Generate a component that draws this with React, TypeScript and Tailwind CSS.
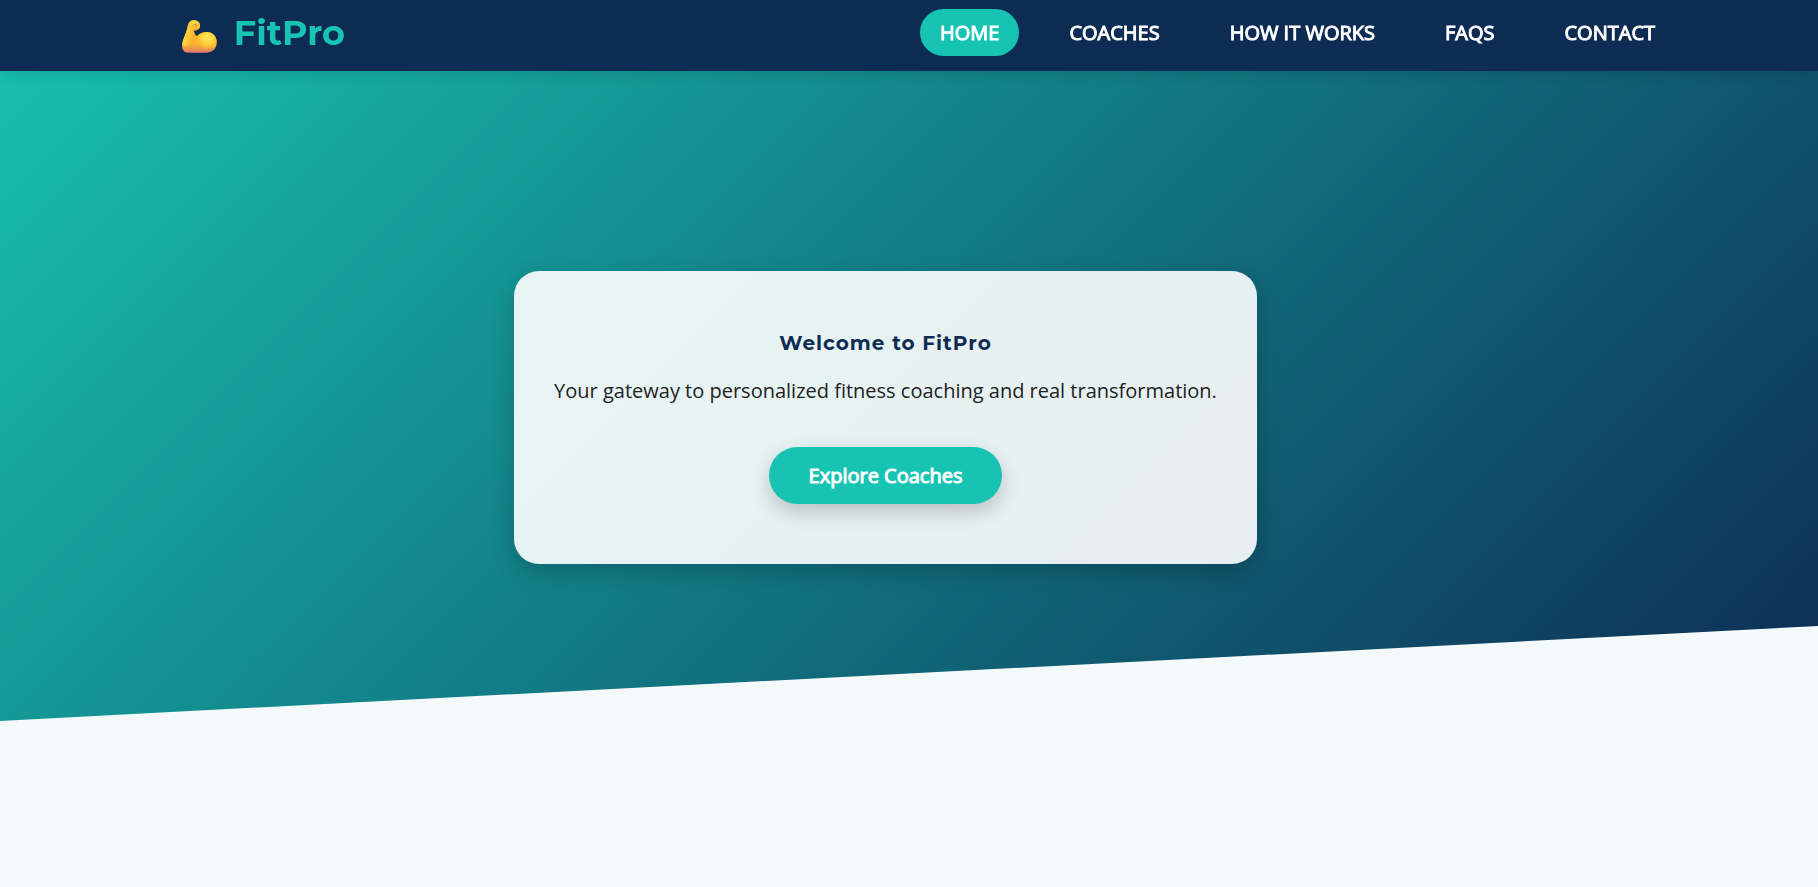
import React from 'react';

const links = [
  { label: 'HOME', href: '#home' },
  { label: 'COACHES', href: '#coaches' },
  { label: 'HOW IT WORKS', href: '#how-it-works' },
  { label: 'FAQS', href: '#faqs' },
  { label: 'CONTACT', href: '#contact' },
];

const ArmIcon: React.FC = () => (
  <svg viewBox="0 0 105 100" className="w-[35px] h-[33px]" aria-hidden="true">
    <defs>
      <linearGradient id="arm" x1="0" y1="0" x2="0" y2="1">
        <stop offset="0" stopColor="#ffd84a" />
        <stop offset="0.68" stopColor="#fdb92e" />
        <stop offset="0.86" stopColor="#f29a48" />
        <stop offset="1" stopColor="#d9777a" />
      </linearGradient>
      <radialGradient id="muscle" cx="0.55" cy="0.3" r="0.65">
        <stop offset="0" stopColor="#ffe958" />
        <stop offset="0.6" stopColor="#ffcc36" />
        <stop offset="1" stopColor="#fdb528" stopOpacity="0" />
      </radialGradient>
      <linearGradient id="forearm" x1="0" y1="0.1" x2="0.8" y2="0.5">
        <stop offset="0" stopColor="#f7a42a" />
        <stop offset="0.5" stopColor="#ffd23f" />
        <stop offset="1" stopColor="#fbb02a" />
      </linearGradient>
      <radialGradient id="fist" cx="0.5" cy="0.3" r="0.7">
        <stop offset="0" stopColor="#ffdc50" />
        <stop offset="1" stopColor="#fbb52c" />
      </radialGradient>
    </defs>
    <path
      d="M18 14C21 5 28 0 36 1C47 1 54 8 54 17C54 27 47 32 36 31C35 38 38 44 45 49C52 40 62 36 74 36C93 36 105 49 105 67C105 86 93 99 75 99H17C6 99 0 90 0 78C0 61 13 42 18 14Z"
      fill="url(#arm)"
    />
    <path d="M18 14C13 42 0 61 0 76C6 84 24 80 44 57C46 54 46 51 45 49C38 44 35 38 36 31Z" fill="url(#forearm)" />
    <circle cx="75" cy="65" r="29" fill="url(#muscle)" />
    <path d="M18 14C21 5 28 0 36 1C47 1 54 8 54 17C54 27 47 32 36 31C28 31 21 24 18 14Z" fill="url(#fist)" />
    <path d="M31 17C34 11 44 12 44 17C44 21 38 21 36 18" fill="none" stroke="#d98f20" strokeWidth="3" />
    <path d="M35 30C41 32 48 30 52 24" fill="none" stroke="#e8982a" strokeWidth="3" />
    <path d="M45 50C42 62 36 70 30 76" fill="none" stroke="#f3a02b" strokeWidth="2" />
    <path d="M45 50C46 60 49 68 54 74" fill="none" stroke="#f8ae2c" strokeWidth="2" />
  </svg>
);

const Header: React.FC = () => (
  <header className="fixed inset-x-0 top-0 z-10 flex items-center justify-between bg-[#0d2c54] pt-[9px] pb-[15px] pl-[10%] pr-[143px] shadow-[0_4px_12px_rgba(0,0,0,0.1)]">
    <a href="#home" className="flex items-end gap-[17px]">
      <ArmIcon />
      <span className="font-['Montserrat','Inter',sans-serif] text-[35px] leading-[40px] font-bold text-[#17c3b2]">
        FitPro
      </span>
    </a>
    <nav className="flex gap-[30px]">
      {links.map((link, i) => (
        <a
          key={link.label}
          href={link.href}
          className={`rounded-[25px] px-5 py-[10px] text-[20px] leading-[27px] text-white [-webkit-text-stroke:1px_white] ${
            i === 0 ? 'bg-[#17c3b2]' : ''
          }`}
        >
          {link.label}
        </a>
      ))}
    </nav>
  </header>
);

// runs under the fixed header, so the top padding includes its height
const Hero: React.FC = () => (
  <section
    id="home"
    className="flex min-h-[721px] items-start justify-center bg-linear-[135deg,#17c3b2,#0d2c54] pt-[271px] pr-[47px] [clip-path:polygon(0_0,100%_0,100%_calc(100%-95px),0_100%)]"
  >
    <div className="flex flex-col items-center rounded-[25px] bg-white/90 px-10 py-[60px] text-center shadow-[0_8px_25px_rgba(0,0,0,0.2)]">
      <h1 className="font-['Montserrat','Inter',sans-serif] text-[20px] leading-[24px] font-bold tracking-[1px] text-[#0d2c54]">
        Welcome to FitPro
      </h1>
      <p className="mt-[22px] text-[20px] leading-[27px] text-[#222222]">
        Your gateway to personalized fitness coaching and real transformation.
      </p>
      <button
        type="button"
        className="mt-[43px] rounded-[30px] bg-[#17c3b2] px-10 py-[15px] text-[20px] leading-[27px] text-white shadow-[0_8px_20px_rgba(0,0,0,0.2)] [-webkit-text-stroke:1px_white]"
      >
        Explore Coaches
      </button>
    </div>
  </section>
);

const App: React.FC = () => {
  return (
    <div className="min-h-screen bg-[#f4fafa] font-['Open_Sans','Noto_Sans',sans-serif]">
      <Header />
      <Hero />
    </div>
  );
};

export default App;
